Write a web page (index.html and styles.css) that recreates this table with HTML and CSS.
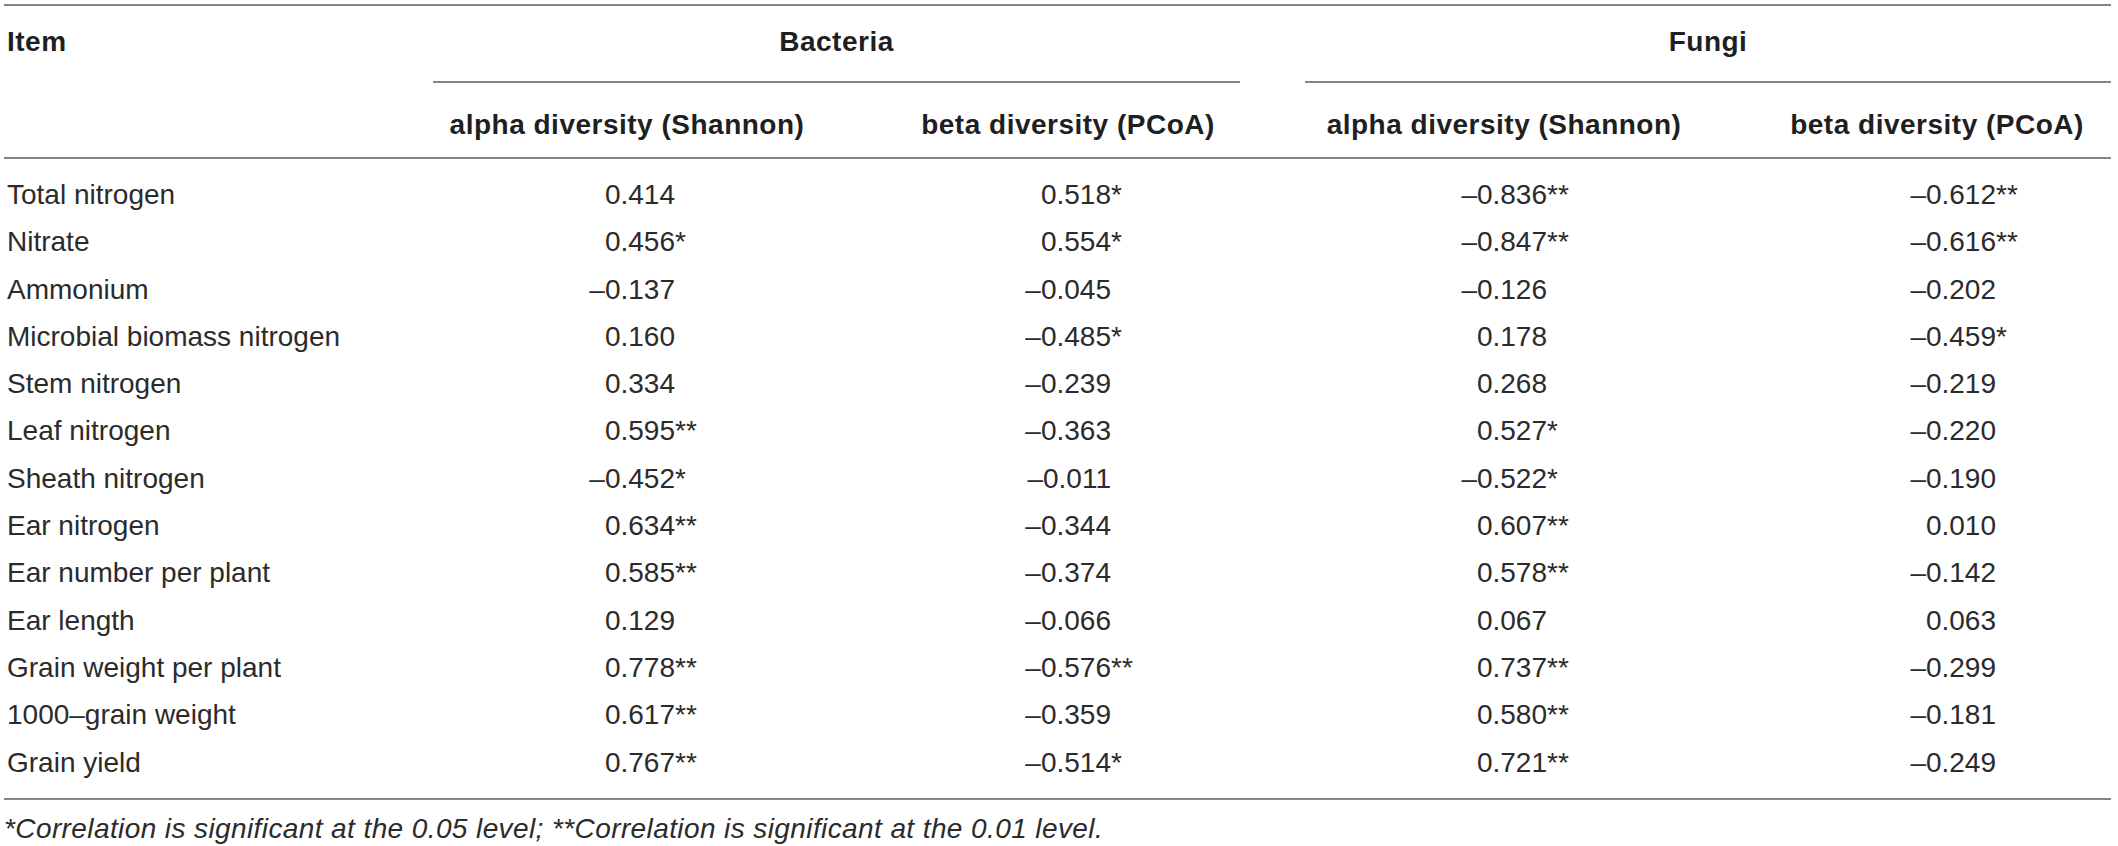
FILE: index.html
```html
<!DOCTYPE html>
<html lang="en">
<head>
  <meta charset="UTF-8">
  <meta name="viewport" content="width=device-width, initial-scale=1.0">
  <title>Correlation table</title>
  <link rel="stylesheet" href="styles.css">
</head>
<body>
  <div class="wrap">
    <table class="corr">
      <colgroup>
        <col class="w-item">
        <col class="w-2">
        <col class="w-3">
        <col class="w-4">
        <col class="w-5">
      </colgroup>
      <thead>
        <tr class="group-row">
          <th class="item" rowspan="2">Item</th>
          <th class="group" colspan="2"><div class="group-label bacteria">Bacteria</div></th>
          <th class="group" colspan="2"><div class="group-label">Fungi</div></th>
        </tr>
        <tr class="sub-row">
          <th class="h2">alpha diversity (Shannon)</th>
          <th class="h3">beta diversity (PCoA)</th>
          <th class="h4">alpha diversity (Shannon)</th>
          <th class="h5">beta diversity (PCoA)</th>
        </tr>
      </thead>
      <tbody>
        <tr>
          <td class="name">Total nitrogen</td>
          <td><span class="num">0.414</span></td>
          <td><span class="num">0.518<span class="sig">*</span></span></td>
          <td><span class="num">–0.836<span class="sig">**</span></span></td>
          <td class="c5"><span class="num">–0.612<span class="sig">**</span></span></td>
        </tr>
        <tr>
          <td class="name">Nitrate</td>
          <td><span class="num">0.456<span class="sig">*</span></span></td>
          <td><span class="num">0.554<span class="sig">*</span></span></td>
          <td><span class="num">–0.847<span class="sig">**</span></span></td>
          <td class="c5"><span class="num">–0.616<span class="sig">**</span></span></td>
        </tr>
        <tr>
          <td class="name">Ammonium</td>
          <td><span class="num">–0.137</span></td>
          <td><span class="num">–0.045</span></td>
          <td><span class="num">–0.126</span></td>
          <td class="c5"><span class="num">–0.202</span></td>
        </tr>
        <tr>
          <td class="name">Microbial biomass nitrogen</td>
          <td><span class="num">0.160</span></td>
          <td><span class="num">–0.485<span class="sig">*</span></span></td>
          <td><span class="num">0.178</span></td>
          <td class="c5"><span class="num">–0.459<span class="sig">*</span></span></td>
        </tr>
        <tr>
          <td class="name">Stem nitrogen</td>
          <td><span class="num">0.334</span></td>
          <td><span class="num">–0.239</span></td>
          <td><span class="num">0.268</span></td>
          <td class="c5"><span class="num">–0.219</span></td>
        </tr>
        <tr>
          <td class="name">Leaf nitrogen</td>
          <td><span class="num">0.595<span class="sig">**</span></span></td>
          <td><span class="num">–0.363</span></td>
          <td><span class="num">0.527<span class="sig">*</span></span></td>
          <td class="c5"><span class="num">–0.220</span></td>
        </tr>
        <tr>
          <td class="name">Sheath nitrogen</td>
          <td><span class="num">–0.452<span class="sig">*</span></span></td>
          <td><span class="num">–0.011</span></td>
          <td><span class="num">–0.522<span class="sig">*</span></span></td>
          <td class="c5"><span class="num">–0.190</span></td>
        </tr>
        <tr>
          <td class="name">Ear nitrogen</td>
          <td><span class="num">0.634<span class="sig">**</span></span></td>
          <td><span class="num">–0.344</span></td>
          <td><span class="num">0.607<span class="sig">**</span></span></td>
          <td class="c5"><span class="num">0.010</span></td>
        </tr>
        <tr>
          <td class="name">Ear number per plant</td>
          <td><span class="num">0.585<span class="sig">**</span></span></td>
          <td><span class="num">–0.374</span></td>
          <td><span class="num">0.578<span class="sig">**</span></span></td>
          <td class="c5"><span class="num">–0.142</span></td>
        </tr>
        <tr>
          <td class="name">Ear length</td>
          <td><span class="num">0.129</span></td>
          <td><span class="num">–0.066</span></td>
          <td><span class="num">0.067</span></td>
          <td class="c5"><span class="num">0.063</span></td>
        </tr>
        <tr>
          <td class="name">Grain weight per plant</td>
          <td><span class="num">0.778<span class="sig">**</span></span></td>
          <td><span class="num">–0.576<span class="sig">**</span></span></td>
          <td><span class="num">0.737<span class="sig">**</span></span></td>
          <td class="c5"><span class="num">–0.299</span></td>
        </tr>
        <tr>
          <td class="name">1000–grain weight</td>
          <td><span class="num">0.617<span class="sig">**</span></span></td>
          <td><span class="num">–0.359</span></td>
          <td><span class="num">0.580<span class="sig">**</span></span></td>
          <td class="c5"><span class="num">–0.181</span></td>
        </tr>
        <tr>
          <td class="name">Grain yield</td>
          <td><span class="num">0.767<span class="sig">**</span></span></td>
          <td><span class="num">–0.514<span class="sig">*</span></span></td>
          <td><span class="num">0.721<span class="sig">**</span></span></td>
          <td class="c5"><span class="num">–0.249</span></td>
        </tr>
      </tbody>
    </table>
    <p class="note">*Correlation is significant at the 0.05 level; **Correlation is significant at the 0.01 level.</p>
  </div>
</body>
</html>
```

FILE: styles.css
```css
html, body {
  margin: 0;
  padding: 0;
  background-color: #fff;
}
.wrap {
  padding: 4px 0 0 4px;
  font-family: "Liberation Sans", Arial, sans-serif;
  color: #2b2b2b;
}
.corr {
  width: 2107px;
  table-layout: fixed;
  border-collapse: separate;
  border-spacing: 0;
  border-top: 2px solid #858585;
  border-bottom: 2px solid #858585;
}
.w-item { width: 429px; }
.w-2 { width: 388px; }
.w-3 { width: 484px; }
.w-4 { width: 388px; }
.w-5 { width: 418px; }

th {
  font-size: 28px;
  font-weight: bold;
  letter-spacing: 0.5px;
  line-height: 40px;
  color: #1f1f1f;
  text-align: center;
  white-space: nowrap;
}
.item {
  text-align: left;
  vertical-align: top;
  padding: 16px 0 0 3px;
  border-bottom: 2px solid #858585;
}
.group {
  padding: 0;
}
.group-label {
  padding: 16px 0 19px;
  border-bottom: 2px solid #858585;
}
.bacteria {
  margin-right: 65px;
}
.sub-row th {
  padding: 22px 0 12px;
  border-bottom: 2px solid #858585;
}
.sub-row .h3,
.sub-row .h4 {
  padding-left: 10px;
}
.sub-row .h5 {
  padding-left: 70px;
}

td {
  font-size: 28px;
  line-height: 47.3px;
  padding: 0;
  text-align: center;
  white-space: nowrap;
}
td.name {
  text-align: left;
  padding-left: 3px;
}
td.c5 {
  padding-left: 92px;
}
tbody tr:first-child td {
  padding-top: 12px;
}
tbody tr:last-child td {
  padding-bottom: 12px;
}
.num {
  display: inline-block;
  width: 96px;
  text-align: right;
}
.sig {
  display: inline-block;
  width: 0;
  text-align: left;
}
.note {
  margin: 13px 0 0;
  font-size: 28px;
  font-style: italic;
  letter-spacing: 0.4px;
  line-height: 32px;
  white-space: nowrap;
}
```
